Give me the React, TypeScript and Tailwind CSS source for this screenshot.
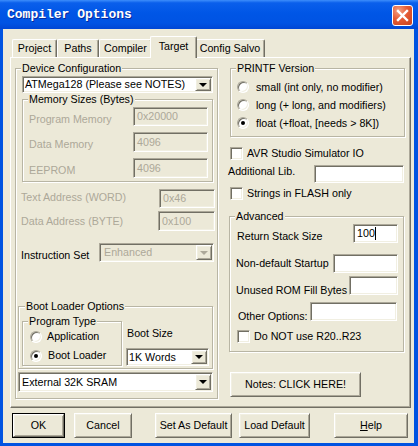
import type {ReactNode} from 'react';

// classic 3D edges, XP beige scheme
const sunken =
  'border border-t-[#ACA899] border-l-[#ACA899] border-r-white border-b-white shadow-[inset_1px_1px_0_#716F64,inset_-1px_-1px_0_#F1EFE2]';
const raised =
  'border border-t-white border-l-white border-r-[#716F64] border-b-[#716F64] shadow-[inset_1px_1px_0_#F1EFE2,inset_-1px_-1px_0_#ACA899]';

function GroupBox({
  label,
  className = '',
  labelClass = 'left-[5px]',
  children
}: {
  label: string;
  className?: string;
  labelClass?: string;
  children?: ReactNode;
}) {
  return (
    <div className={`relative shrink-0 border border-[#B8B5A4] shadow-[inset_1px_1px_0_#fff,1px_1px_0_#fff] ${className}`}>
      <span className={`absolute top-[-7px] ${labelClass} bg-[#ECE9D8] px-[1px]`}>{label}</span>
      {children}
    </div>
  );
}

function Combo({
  value,
  className = '',
  textClass = 'pl-[1px]',
  disabled = false
}: {
  value: string;
  className?: string;
  textClass?: string;
  disabled?: boolean;
}) {
  return (
    <div
      className={`flex shrink-0 p-[1px] ${sunken} ${disabled ? 'bg-[#ECE9D8] text-[#ACA899]' : 'bg-white'} ${className}`}
    >
      <span className={`flex flex-1 items-center overflow-hidden ${textClass}`}>{value}</span>
      <span className={`flex w-[16px] items-center justify-center bg-[#ECE9D8] ${raised}`}>
        <span
          className={`border-x-[4px] border-t-[4px] border-x-transparent ${disabled ? 'border-t-[#ACA899]' : 'border-t-black'}`}
        />
      </span>
    </div>
  );
}

function Field({
  value = '',
  className = '',
  disabled = false,
  children
}: {
  value?: string;
  className?: string;
  disabled?: boolean;
  children?: ReactNode;
}) {
  return (
    <div
      className={`flex shrink-0 items-center pl-[3px] ${sunken} ${disabled ? 'bg-[#ECE9D8] text-[#ACA899]' : 'bg-white'} ${className}`}
    >
      {value}
      {children}
    </div>
  );
}

function Check({label, className = ''}: {label: string; className?: string}) {
  return (
    <div className={`flex h-[13px] items-center gap-[4px] ${className}`}>
      <span className={`h-[13px] w-[13px] bg-white ${sunken}`} />
      <span>{label}</span>
    </div>
  );
}

function Radio({
  label,
  checked = false,
  className = '',
  gap = 'gap-[5px]'
}: {
  label: string;
  checked?: boolean;
  className?: string;
  gap?: string;
}) {
  return (
    <div className={`flex items-center ${gap} ${className}`}>
      <span className="flex h-[12px] w-[12px] items-center justify-center rounded-full border border-t-[#ACA899] border-l-[#ACA899] border-r-white border-b-white bg-white shadow-[inset_1px_1px_0_#716F64,inset_-1px_-1px_0_#F1EFE2]">
        {checked ? <span className="h-[4px] w-[4px] rounded-full bg-black" /> : null}
      </span>
      <span>{label}</span>
    </div>
  );
}

function Btn({children, className = ''}: {children: ReactNode; className?: string}) {
  return (
    <div className={`flex items-center justify-center bg-[#ECE9D8] ${raised} ${className}`}>
      {children}
    </div>
  );
}

function Tab({label, className = '', selected = false}: {label: string; className?: string; selected?: boolean}) {
  return (
    <div
      className={`flex items-center justify-center rounded-t-[2px] border-t border-l border-r border-t-white border-l-white border-r-[#716F64] bg-[#ECE9D8] shadow-[inset_-1px_0_0_#ACA899] ${
        selected ? 'relative z-10 mx-[-2px] mb-[-1px] h-[22px] pb-[3px]' : 'h-[18px]'
      } ${className}`}
    >
      {label}
    </div>
  );
}

export default function App() {
  return (
    <div className="flex h-[446px] w-[418px] flex-col whitespace-nowrap bg-[#0053E1] pb-[3px] pl-[3px] pr-[4px] font-['Liberation_Sans',Arial,sans-serif] text-[10.7px] leading-[13px] text-black">
      {/* title bar */}
      <div className="mx-[-3px] mr-[-4px] flex h-[29px] items-start justify-between bg-[linear-gradient(to_bottom,#3D8EFB_0%,#0A5FEB_10%,#0056E6_45%,#0053E3_80%,#0046D4_100%)] pl-[7px] pr-[5px]">
        <span className="mt-[7px] font-['Liberation_Mono',monospace] text-[13px] font-bold leading-[16px] text-white [text-shadow:1px_1px_0_#0A2A9C]">
          Compiler Options
        </span>
        <div className="mt-[5px] flex h-[21px] w-[21px] items-center justify-center rounded-[3px] border border-white bg-[radial-gradient(circle_at_30%_25%,#F3A285_0%,#E55B35_45%,#C8411D_100%)]">
          <svg width="13" height="13" viewBox="0 0 13 13">
            <path d="M2 2 L11 11 M11 2 L2 11" stroke="#fff" strokeWidth="2.4" strokeLinecap="square" />
          </svg>
        </div>
      </div>

      {/* dialog face */}
      <div className="flex flex-1 flex-col bg-[#ECE9D8] pl-[7px] pr-[3px] pt-[7px]">
        <div className="flex h-[21px] items-end pl-[2px]">
          <Tab label="Project" className="w-[45px]" />
          <Tab label="Paths" className="w-[42px]" />
          <Tab label="Compiler" className="w-[53px]" />
          <Tab label="Target" selected className="w-[47px]" />
          <Tab label="Config Salvo" className="w-[70px]" />
        </div>

        <div className="flex h-[351px] w-[401px] border border-t-white border-l-white border-r-[#716F64] border-b-[#716F64] pl-[4px] shadow-[inset_-1px_-1px_0_#ACA899]">
          {/* left column */}
          <GroupBox label="Device Configuration" className="mt-[10px] flex h-[331px] w-[203px] flex-col">
            <Combo value="ATMega128 (Please see NOTES)" className="ml-[6px] mt-[7px] h-[17px] w-[191px]" />

            <GroupBox label="Memory Sizes (Bytes)" className="ml-[6px] mt-[6px] flex h-[83px] w-[191px] flex-col">
              <div className="ml-[6px] mt-[7px] flex h-[19px] w-[179px] items-center justify-between">
                <span className="mt-[5px] text-[#ACA899]">Program Memory</span>
                <Field value="0x20000" disabled className="h-[19px] w-[75px]" />
              </div>
              <div className="ml-[6px] mt-[6px] flex h-[20px] w-[179px] items-center justify-between">
                <span className="mt-[5px] text-[#ACA899]">Data Memory</span>
                <Field value="4096" disabled className="h-[20px] w-[75px]" />
              </div>
              <div className="ml-[6px] mt-[6px] flex h-[20px] w-[179px] items-center justify-between">
                <span className="mt-[5px] text-[#ACA899]">EEPROM</span>
                <Field value="4096" disabled className="h-[20px] w-[75px]" />
              </div>
            </GroupBox>

            <div className="ml-[5px] mt-[7px] flex h-[19px] w-[194px] items-center justify-between">
              <span className="mb-[3px] text-[#ACA899]">Text Address (WORD)</span>
              <Field value="0x46" disabled className="h-[19px] w-[56px]" />
            </div>
            <div className="ml-[5px] mt-[3px] flex h-[20px] w-[194px] items-center justify-between">
              <span className="text-[#ACA899]">Data Address (BYTE)</span>
              <Field value="0x100" disabled className="h-[20px] w-[57px]" />
            </div>
            <div className="ml-[5px] mt-[12px] flex h-[19px] w-[193px] items-center justify-between">
              <span className="mt-[6px]">Instruction Set</span>
              <Combo value="Enhanced" disabled textClass="pl-[3px]" className="h-[19px] w-[115px]" />
            </div>

            <GroupBox
              label="Boot Loader Options"
              labelClass="left-[6px]"
              className="ml-[2px] mt-[44px] flex h-[63px] w-[195px]"
            >
              <GroupBox label="Program Type" className="ml-[3px] mt-[14px] flex h-[45px] w-[100px] flex-col">
                <Radio label="Application" className="ml-[7px] mt-[8px] h-[13px]" />
                <Radio label="Boot Loader" checked className="ml-[7px] mt-[6px] h-[13px]" gap="gap-[6px]" />
              </GroupBox>
              <div className="ml-[4px] flex flex-col">
                <span className="ml-[1px] mt-[20px]">Boot Size</span>
                <Combo value="1K Words" className="mt-[8px] h-[18px] w-[83px]" />
              </div>
            </GroupBox>

            <Combo value="External 32K SRAM" textClass="pl-[2px]" className="ml-[2px] mt-[3px] h-[20px] w-[195px]" />
          </GroupBox>

          {/* right column */}
          <div className="ml-[10px] flex w-[177px] flex-col">
            <GroupBox label="PRINTF Version" className="ml-[2px] mt-[10px] flex h-[69px] w-[175px] flex-col">
              <Radio label="small (int only, no modifier)" gap="gap-[7px]" className="ml-[6px] mt-[9px] h-[18px]" />
              <Radio label="long (+ long, and modifiers)" gap="gap-[7px]" className="ml-[6px] h-[18px]" />
              <Radio label="float (+float, [needs > 8K])" checked gap="gap-[7px]" className="ml-[6px] h-[18px]" />
            </GroupBox>

            <Check label="AVR Studio Simulator IO" className="ml-[2px] mt-[10px]" />

            <div className="mt-[5px] flex h-[18px] w-[176px] items-center justify-between">
              <span className="mb-[6px]">Additional Lib.</span>
              <Field className="h-[18px] w-[90px]" />
            </div>

            <Check label="Strings in FLASH only" className="ml-[2px] mt-[4px]" />

            <GroupBox label="Advanced" className="ml-[1px] mt-[16px] flex h-[136px] w-[175px] flex-col">
              <div className="ml-[7px] mt-[7px] flex h-[19px] w-[161px] items-center justify-between">
                <span className="mt-[5px]">Return Stack Size</span>
                <Field value="100" className="h-[19px] w-[45px]">
                  <span className="h-[13px] w-[1px] bg-black" />
                </Field>
              </div>
              <div className="ml-[6px] mt-[11px] flex h-[19px] w-[162px] items-center justify-between">
                <span>Non-default Startup</span>
                <Field className="h-[19px] w-[65px]" />
              </div>
              <div className="ml-[6px] mt-[3px] flex h-[19px] w-[162px] items-center justify-between">
                <span className="mt-[9px]">Unused ROM Fill Bytes</span>
                <Field className="h-[19px] w-[49px]" />
              </div>
              <div className="ml-[8px] mt-[7px] flex h-[19px] w-[159px] items-center justify-between">
                <span className="mt-[10px]">Other Options:</span>
                <Field className="h-[19px] w-[87px]" />
              </div>
              <Check label="Do NOT use R20..R23" className="ml-[7px] mt-[9px]" />
            </GroupBox>

            <Btn className="ml-[2px] mt-[20px] h-[25px] w-[131px]">Notes: CLICK HERE!</Btn>
          </div>
        </div>

        {/* dialog buttons */}
        <div className="mt-[5px] flex h-[25px]">
          <div className="ml-[2px] flex h-[25px] w-[53px] border border-black">
            <Btn className="flex-1">OK</Btn>
          </div>
          <Btn className="ml-[9px] w-[58px]">Cancel</Btn>
          <Btn className="ml-[23px] w-[77px]">Set As Default</Btn>
          <Btn className="ml-[7px] w-[71px]">Load Default</Btn>
          <Btn className="ml-[24px] w-[74px]">
            <span className="underline">H</span>elp
          </Btn>
        </div>
      </div>
    </div>
  );
}
